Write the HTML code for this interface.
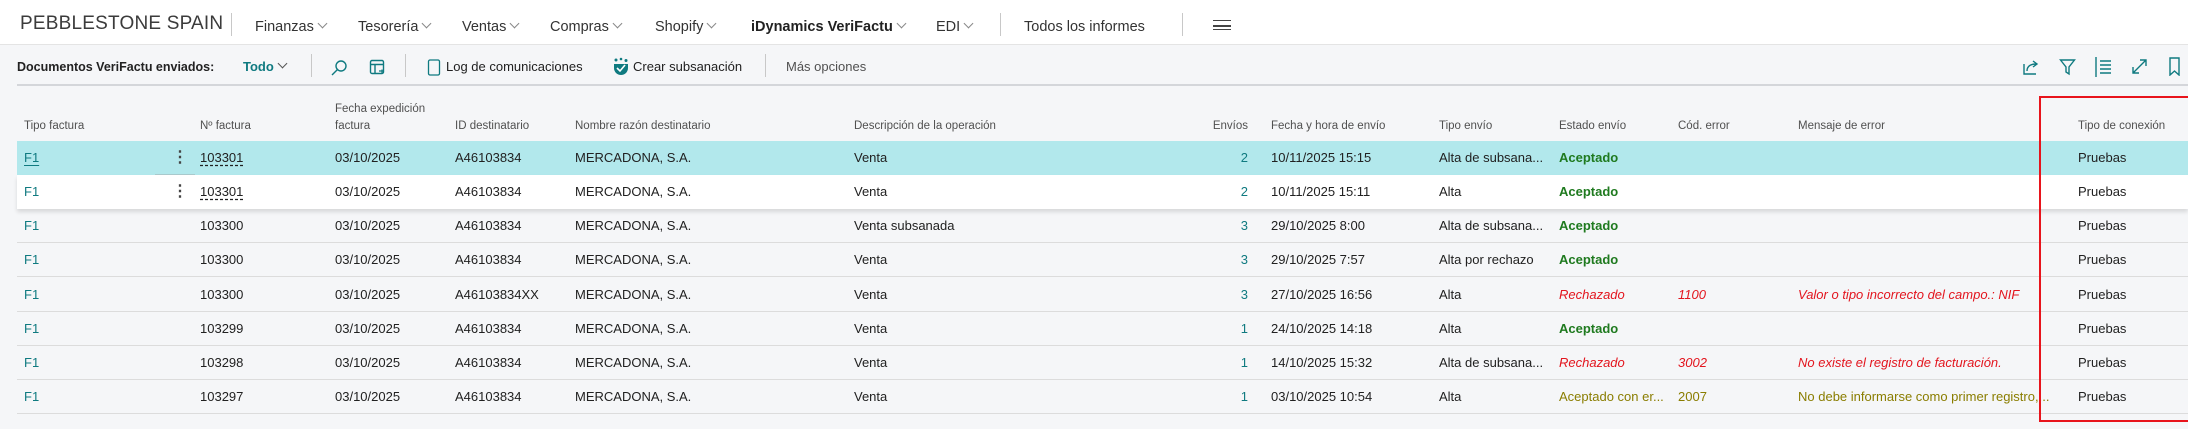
<!DOCTYPE html>
<html><head><meta charset="utf-8">
<style>
*{margin:0;padding:0;box-sizing:border-box}
body{width:2188px;height:429px;overflow:hidden;background:#f5f6f8;font-family:"Liberation Sans",sans-serif;color:#212121;position:relative}
.a{position:absolute;white-space:nowrap}
#nav{position:absolute;left:0;top:0;width:2188px;height:45px;background:#fff;border-bottom:1px solid #e4e4e4}
.nv{position:absolute;top:18px;font-size:14.5px;color:#333;line-height:18px}
.chev{display:inline-block;width:7px;height:7px;border-right:1px solid #888;border-bottom:1px solid #888;transform:rotate(45deg);margin-left:5px;position:relative;top:-4px}
.vsep{position:absolute;width:1px;background:#c8c8c8}
.tb{position:absolute;top:58px;font-size:13px;line-height:18px}
.hd{position:absolute;font-size:11.5px;color:#505050;line-height:17px}
.row{position:absolute;left:17px;width:2171px;height:34px;border-bottom:1px solid #dcdcdc}
.c{position:absolute;font-size:13px;line-height:34px;top:0;white-space:nowrap}
.t{color:#0f7a80}
.ok{color:#1f7a1f;font-weight:bold}
.rj{color:#e3151e;font-style:italic}
.ol{color:#8a7d00}
.u{text-decoration:underline dashed;text-underline-offset:3px}
</style></head><body>
<div id="nav">
 <div class="a" style="left:20px;top:13px;font-size:19px;color:#3b3b3b;letter-spacing:0.2px">PEBBLESTONE SPAIN</div>
 <div class="vsep" style="left:231px;top:13px;height:23px"></div>
 <div class="nv" style="left:255px">Finanzas<span class="chev"></span></div>
 <div class="nv" style="left:358px">Tesorería<span class="chev"></span></div>
 <div class="nv" style="left:462px">Ventas<span class="chev"></span></div>
 <div class="nv" style="left:550px">Compras<span class="chev"></span></div>
 <div class="nv" style="left:655px">Shopify<span class="chev"></span></div>
 <div class="nv" style="left:751px;font-weight:bold;color:#222">iDynamics VeriFactu<span class="chev"></span></div>
 <div class="nv" style="left:936px">EDI<span class="chev"></span></div>
 <div class="vsep" style="left:1000px;top:13px;height:23px"></div>
 <div class="nv" style="left:1024px">Todos los informes</div>
 <div class="vsep" style="left:1182px;top:13px;height:23px"></div>
 <div class="a" style="left:1213px;top:20px;width:18px;height:10px;border-top:1.5px solid #444;border-bottom:1.5px solid #444"></div>
 <div class="a" style="left:1213px;top:25px;width:18px;height:1.5px;background:#444"></div>
</div>
<!-- toolbar -->
<div class="tb" style="left:17px;font-weight:bold;color:#222;font-size:12.5px">Documentos VeriFactu enviados:</div>
<div class="tb" style="left:243px;font-weight:bold;color:#0f7a80">Todo<span class="chev" style="border-color:#555"></span></div>
<div class="vsep" style="left:311px;top:54px;height:23px"></div>
<svg class="a" style="left:330px;top:59px" width="18" height="18" viewBox="0 0 18 18" fill="none" stroke="#0f7a80" stroke-width="1.4"><circle cx="11" cy="7" r="5"/><path d="M7.5 10.5L2 16"/></svg>
<svg class="a" style="left:369px;top:59px" width="17" height="17" viewBox="0 0 17 17" fill="none" stroke="#0f7a80" stroke-width="1.4"><rect x="1.5" y="1.5" width="13" height="13" rx="1.5"/><path d="M1.5 5.5h13M6 5.5v9"/><path d="M10 12h5M13 10.5v4" stroke-width="1.2"/></svg>
<div class="vsep" style="left:405px;top:54px;height:23px"></div>
<svg class="a" style="left:427px;top:59px" width="14" height="17" viewBox="0 0 14 17" fill="none" stroke="#0f7a80" stroke-width="1.3"><rect x="1.5" y="1" width="11" height="15" rx="1.5"/></svg>
<div class="tb" style="left:446px">Log de comunicaciones</div>
<svg class="a" style="left:612px;top:57px" width="18" height="19" viewBox="0 0 18 19"><path d="M2 7h14v4a7 7 0 0 1-14 0z" fill="#0f7a80"/><path d="M5 11l3 3 5-6" stroke="#fff" stroke-width="1.6" fill="none"/><circle cx="4" cy="3" r="1.5" fill="#0f7a80"/><circle cx="9" cy="2" r="1.3" fill="#0f7a80"/><circle cx="14" cy="3.5" r="1.5" fill="#0f7a80"/></svg>
<div class="tb" style="left:633px">Crear subsanación</div>
<div class="vsep" style="left:765px;top:54px;height:23px"></div>
<div class="tb" style="left:786px;color:#505050">Más opciones</div>
<!-- right icons -->
<svg class="a" style="left:2022px;top:58px" width="18" height="18" viewBox="0 0 18 18" fill="none" stroke="#0f7a80" stroke-width="1.4"><path d="M2 6v10h12"/><path d="M5 13c0-5 4-7 9-7M11 3l4 3-4 3"/></svg>
<svg class="a" style="left:2059px;top:58px" width="17" height="18" viewBox="0 0 17 18" fill="none" stroke="#0f7a80" stroke-width="1.4"><path d="M1.5 2h14l-5.5 7v7l-3-2v-5z"/></svg>
<svg class="a" style="left:2094px;top:56px" width="18" height="22" viewBox="0 0 18 22" fill="none" stroke="#0f7a80" stroke-width="1.4"><path d="M2 1v20M6 5h11M6 9h11M6 13h11M6 17h11"/></svg>
<svg class="a" style="left:2131px;top:58px" width="17" height="17" viewBox="0 0 17 17" fill="none" stroke="#0f7a80" stroke-width="1.4"><path d="M2 15L15 2M9 2h6v6M2 9v6h6"/></svg>
<svg class="a" style="left:2168px;top:57px" width="13" height="19" viewBox="0 0 13 19" fill="none" stroke="#0f7a80" stroke-width="1.4"><path d="M2 1h9v17l-4.5-4L2 18z"/></svg>
<div class="a" style="left:17px;top:84px;width:2171px;height:1.5px;background:#d4d6da"></div>
<!-- headers -->
<div class="hd" style="left:24px;top:118px">Tipo factura</div>
<div class="hd" style="left:200px;top:118px">Nº factura</div>
<div class="hd" style="left:335px;top:101px">Fecha expedición<br>factura</div>
<div class="hd" style="left:455px;top:118px">ID destinatario</div>
<div class="hd" style="left:575px;top:118px">Nombre razón destinatario</div>
<div class="hd" style="left:854px;top:118px">Descripción de la operación</div>
<div class="hd" style="left:1210px;top:118px;width:38px;text-align:right">Envíos</div>
<div class="hd" style="left:1271px;top:118px">Fecha y hora de envío</div>
<div class="hd" style="left:1439px;top:118px">Tipo envío</div>
<div class="hd" style="left:1559px;top:118px">Estado envío</div>
<div class="hd" style="left:1678px;top:118px">Cód. error</div>
<div class="hd" style="left:1798px;top:118px">Mensaje de error</div>
<div class="hd" style="left:2078px;top:118px">Tipo de conexión</div>
<!-- rows -->
<div class="row" style="top:141px;background:#b2e8ec;border-color:#b2e8ec"></div>
<div class="row" style="top:175px;background:#fff;border:none;height:34px;box-shadow:0 3px 4px rgba(0,0,0,0.12)"></div>
<div class="row" style="top:209px"></div>
<div class="row" style="top:243px"></div>
<div class="row" style="top:278px"></div>
<div class="row" style="top:312px"></div>
<div class="row" style="top:346px"></div>
<div class="row" style="top:380px"></div>
<div class="a" style="left:155px;top:174px;width:40px;height:1px;background:#a9c9cc"></div>

<div id="cells"></div>
<script>
var rows=[
["F1",1,"103301","A46103834","Venta","2","10/11/2025 15:15","Alta de subsana...",["ok","Aceptado"],"","",""],
["F1",1,"103301","A46103834","Venta","2","10/11/2025 15:11","Alta",["ok","Aceptado"],"","",""],
["F1",0,"103300","A46103834","Venta subsanada","3","29/10/2025 8:00","Alta de subsana...",["ok","Aceptado"],"","",""],
["F1",0,"103300","A46103834","Venta","3","29/10/2025 7:57","Alta por rechazo",["ok","Aceptado"],"","",""],
["F1",0,"103300","A46103834XX","Venta","3","27/10/2025 16:56","Alta",["rj","Rechazado"],"1100","Valor o tipo incorrecto del campo.: NIF","rj"],
["F1",0,"103299","A46103834","Venta","1","24/10/2025 14:18","Alta",["ok","Aceptado"],"","",""],
["F1",0,"103298","A46103834","Venta","1","14/10/2025 15:32","Alta de subsana...",["rj","Rechazado"],"3002","No existe el registro de facturación.","rj"],
["F1",0,"103297","A46103834","Venta","1","03/10/2025 10:54","Alta",["ol","Aceptado con er..."],"2007","No debe informarse como primer registro,...","ol"]];
var tops=[141,175,209,243,278,312,346,380],h="";
rows.forEach(function(r,i){var t=tops[i];
function c(x,txt,cls,st){h+='<div class="c '+(cls||'')+'" style="left:'+x+'px;top:'+t+'px;'+(st||'')+'">'+txt+'</div>';}
c(24,r[0],'t'+(i==0?' u':''),i==0?'text-decoration:underline solid;':'');
if(i<2)c(172,'⋮','','font-size:16px;font-weight:bold;color:#444');
c(200,r[2],r[1]?'u':'');
c(335,'03/10/2025');c(455,r[3]);c(575,'MERCADONA, S.A.');c(854,r[4]);
c(1200,r[5],'t','width:48px;text-align:right');
c(1271,r[6]);c(1439,r[7]);c(1559,r[8][1],r[8][0]);
c(1678,r[9],r[11]);c(1798,r[10],r[11]);c(2078,'Pruebas');
});
document.getElementById('cells').innerHTML=h;
</script>
<div class="a" style="left:2039px;top:96px;width:160px;height:326px;border:2px solid #e8141c"></div>
</body></html>
